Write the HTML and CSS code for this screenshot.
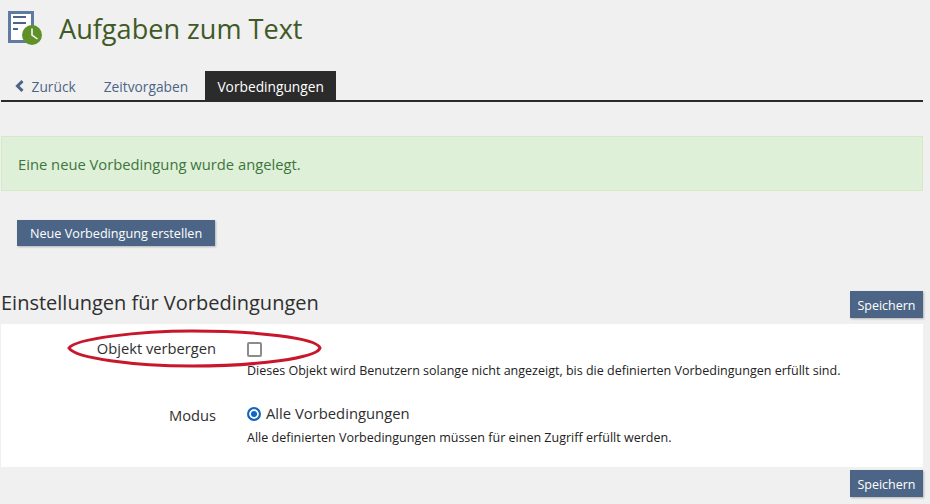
FILE: index.html
```html
<!DOCTYPE html>
<html lang="de">
<head>
    <meta charset="UTF-8">
    <title>Aufgaben zum Text</title>
    <link rel="stylesheet" href="styles.css">
</head>
<body>
    <div class="page">
        <div class="page-head">
            <svg class="head-icon" width="36" height="36" viewBox="0 0 36 36">
                <rect x="1.5" y="1.5" width="23" height="29" fill="#fff" stroke="#5f7aa5" stroke-width="3"/>
                <rect x="5" y="5" width="13" height="2" fill="#4c6586"/>
                <rect x="5" y="11" width="13" height="2" fill="#4c6586"/>
                <rect x="5" y="17" width="5" height="2" fill="#4c6586"/>
                <circle cx="24" cy="24" r="10" fill="#5e9228"/>
                <path d="M24 17.5v6.7l5.5 3.8" fill="none" stroke="#fff" stroke-width="1.5"/>
            </svg>
            <h1>Aufgaben zum Text</h1>
        </div>

        <div class="tabs">
            <a class="tab back">
                <svg width="10" height="12" viewBox="0 0 10 12"><path d="M7.5 1.2 2.5 6l5 4.8" fill="none" stroke="#4c6586" stroke-width="3"/></svg>
                Zurück
            </a>
            <a class="tab time">Zeitvorgaben</a>
            <a class="tab active">Vorbedingungen</a>
        </div>

        <div class="alert">Eine neue Vorbedingung wurde angelegt.</div>

        <button class="btn btn-new">Neue Vorbedingung erstellen</button>

        <div class="section-head">
            <h2>Einstellungen für Vorbedingungen</h2>
            <button class="btn">Speichern</button>
        </div>

        <div class="panel">
            <div class="row row-first">
                <div class="label">Objekt verbergen</div>
                <div class="field">
                    <span class="checkbox"></span>
                    <p class="help">Dieses Objekt wird Benutzern solange nicht angezeigt, bis die definierten Vorbedingungen erfüllt sind.</p>
                </div>
            </div>
            <div class="row row-mode">
                <div class="label">Modus</div>
                <div class="field">
                    <div class="radio-line">
                        <span class="radio"></span>
                        Alle Vorbedingungen
                    </div>
                    <p class="help">Alle definierten Vorbedingungen müssen für einen Zugriff erfüllt werden.</p>
                </div>
            </div>
            <!-- red marker drawn over the screenshot -->
            <svg class="marker" width="256" height="40" viewBox="0 0 256 40">
                <path d="M2 19C8 10 70 2 125 2C190 2 250 9 253 19C250 29 190 37 125 37C66 37 8 29 2 19Z" fill="none" stroke="#c8162b" stroke-width="3"/>
            </svg>
        </div>

        <div class="panel-foot">
            <button class="btn">Speichern</button>
        </div>
    </div>
</body>
</html>
```

FILE: styles.css
```css
html, body {
    margin: 0;
    padding: 0;
}

body {
    font-family: "Open Sans", sans-serif;
    background: #f0f0f0;
    color: #2f2f2f;
    width: 930px;
    height: 504px;
    overflow: hidden;
}

.page {
    width: 922px;
    margin-left: 1px;
}

.page-head {
    display: flex;
    align-items: center;
    height: 71px;
    padding-left: 7px;
    box-sizing: border-box;
    padding-bottom: 14px;
}

.head-icon {
    flex: none;
}

h1 {
    margin: 0 0 0 15px;
    font-size: 27.1px;
    font-weight: 400;
    color: #3f5a27;
    line-height: 36px;
}

.tabs {
    display: flex;
    height: 29px;
    border-bottom: 2px solid #2b2b2b;
}

.tab {
    display: block;
    font-size: 13.75px;
    line-height: 31px;
    color: #4c6586;
}

.back {
    margin-left: 14px;
}

.back svg {
    margin-right: 3px;
}

.time {
    margin-left: 28px;
}

.tab.active {
    margin-left: 17px;
    width: 131px;
    text-align: center;
    background: #2b2b2b;
    color: #fff;
}

.alert {
    margin-top: 34px;
    height: 55px;
    box-sizing: border-box;
    padding-left: 16px;
    font-size: 14.75px;
    line-height: 54px;
    color: #3c763d;
    background: #dff0d8;
    border: 1px solid #d6e9c6;
}

.btn {
    display: block;
    height: 27px;
    padding: 1px 7.5px 0;
    border: none;
    font-family: inherit;
    font-size: 12.5px;
    color: #fff;
    background: #4c6586;
    box-shadow: 1px 1px 2px rgba(0, 0, 0, 0.25);
}

.btn-new {
    margin: 29px 0 0 16px;
    height: 26px;
    padding: 0 13px;
    font-size: 12.65px;
}

.section-head {
    display: flex;
    justify-content: space-between;
    align-items: flex-end;
    margin-top: 44px;
}

h2 {
    margin: 0 0 2px;
    font-size: 20px;
    font-weight: 400;
    line-height: 26px;
}

.panel {
    position: relative;
    margin-top: 6px;
    height: 143px;
    background: #fff;
    box-sizing: border-box;
    padding-top: 14px;
}

.row {
    display: flex;
    margin-bottom: 22px;
}

.label {
    width: 215px;
    margin-top: -1px;
    text-align: right;
    font-size: 14.7px;
    line-height: 23px;
}

.row-mode .label {
    margin-top: 3px;
}

.field {
    margin-left: 31px;
}

.checkbox {
    display: block;
    width: 11px;
    height: 11px;
    margin-top: 4px;
    border: 2px solid #8c8c8c;
    border-radius: 2px;
}

.help {
    margin: 6px 0 0;
    font-size: 12.52px;
    line-height: 16px;
    color: #222;
}

.radio-line {
    display: flex;
    align-items: center;
    gap: 5px;
    padding-top: 1px;
    margin-bottom: -1px;
    font-size: 14.8px;
    line-height: 23px;
}

.radio {
    width: 10px;
    height: 10px;
    border: 2px solid #1465c0;
    border-radius: 50%;
    background: #1465c0;
    box-shadow: inset 0 0 0 2px #fff;
}

.marker {
    position: absolute;
    left: 66px;
    top: 5px;
}

.panel-foot {
    display: flex;
    justify-content: flex-end;
    margin-top: 3px;
}
```
